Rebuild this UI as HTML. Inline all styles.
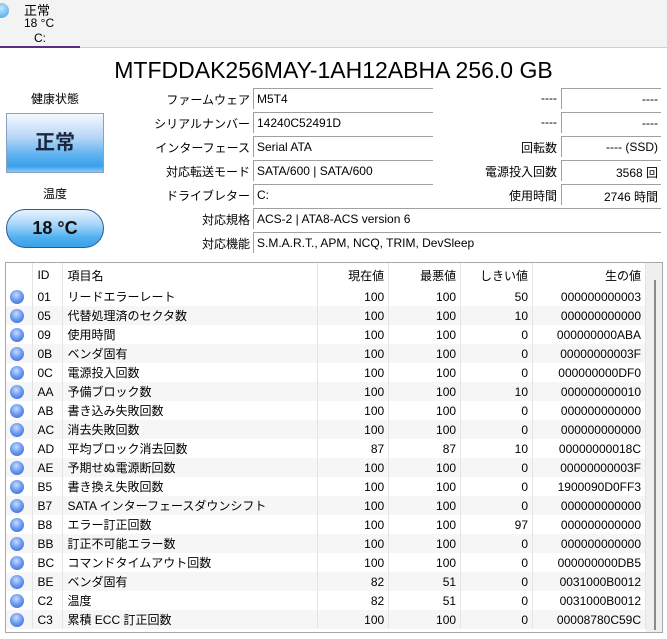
<!DOCTYPE html>
<html><head><meta charset="utf-8"><style>
*{margin:0;padding:0;box-sizing:border-box}
body{width:667px;height:639px;background:#fff;font-family:"Liberation Sans","Noto Sans CJK JP",sans-serif;font-size:12px;color:#000;position:relative;overflow:hidden}
.a{position:absolute}
.lbl{position:absolute;text-align:right;white-space:nowrap;font-size:12px}
.box{position:absolute;height:21px;border-top:1px solid #a0a0a0;border-left:1px solid #a0a0a0;padding:3px 3px;font-size:12px;white-space:nowrap}
.boxr{text-align:right}
table{border-collapse:collapse;position:absolute;left:6px;top:263px;width:640px;font-size:12px}
td{height:19px;padding:0 4px;white-space:nowrap;border-right:1px solid #e4e4e4}
tr.h td{height:24px}
tr:nth-child(odd):not(.h) td{background:#f6f6f6}
.r{text-align:right}
.dot{display:inline-block;width:14px;height:14px;border-radius:50%;background:radial-gradient(circle at 45% 35%,#c8dcff 0,#6f9cf0 45%,#2f5fd0 100%);vertical-align:middle}
</style></head><body>
<div class="a" style="left:0;top:0;width:667px;height:47px;background:#f3f3f3"></div>
<div class="a" style="left:-6px;top:3px;width:15px;height:15px;border-radius:50%;background:radial-gradient(circle at 50% 35%,#bfe6ff,#39a0e8)"></div>
<div class="a" style="left:24px;top:0px;font-size:13px">正常</div>
<div class="a" style="left:24px;top:16px;font-size:12px">18 °C</div>
<div class="a" style="left:34px;top:31px;font-size:12px">C:</div>
<div class="a" style="left:0;top:46px;width:80px;height:2px;background:#5a2d82"></div>
<div class="a" style="left:80px;top:47px;width:587px;height:1px;background:#d0d0d0"></div>

<div class="a" style="left:0;width:667px;top:57px;text-align:center;font-size:23px">MTFDDAK256MAY-1AH12ABHA 256.0 GB</div>

<div class="a" style="left:6px;width:98px;top:90px;text-align:center;font-size:12px">健康状態</div>
<div class="a" style="left:6px;top:113px;width:98px;height:60px;border:1px solid #8aa0c0;background:linear-gradient(#f4f8ff 0%,#b8d6f6 40%,#5fb3f0 70%,#3aa0ea 90%,#8ccaf4 100%);text-align:center;font-size:20px;font-weight:bold;line-height:58px;color:#1a2540">正常</div>
<div class="a" style="left:6px;width:98px;top:185px;text-align:center">温度</div>
<div class="a" style="left:6px;top:209px;width:98px;height:39px;border:1px solid #2a5a9a;border-radius:20px;background:linear-gradient(#e8f4ff 0%,#a6d4f8 40%,#4fb0f0 75%,#3aa0ea 100%);text-align:center;font-size:18px;font-weight:bold;line-height:37px;color:#111">18 °C</div>

<div class="lbl" style="right:417px;top:91px">ファームウェア</div>
<div class="lbl" style="right:417px;top:115px">シリアルナンバー</div>
<div class="lbl" style="right:417px;top:139px">インターフェース</div>
<div class="lbl" style="right:417px;top:163px">対応転送モード</div>
<div class="lbl" style="right:417px;top:187px">ドライブレター</div>
<div class="lbl" style="right:417px;top:211px">対応規格</div>
<div class="lbl" style="right:417px;top:235px">対応機能</div>

<div class="box" style="left:253px;top:88px;width:180px">M5T4</div>
<div class="box" style="left:253px;top:112px;width:180px">14240C52491D</div>
<div class="box" style="left:253px;top:136px;width:180px">Serial ATA</div>
<div class="box" style="left:253px;top:160px;width:180px">SATA/600 | SATA/600</div>
<div class="box" style="left:253px;top:184px;width:180px">C:</div>
<div class="box" style="left:253px;top:208px;width:408px">ACS-2 | ATA8-ACS version 6</div>
<div class="box" style="left:253px;top:232px;width:408px">S.M.A.R.T., APM, NCQ, TRIM, DevSleep</div>

<div class="lbl" style="right:110px;top:91px">----</div>
<div class="lbl" style="right:110px;top:115px">----</div>
<div class="lbl" style="right:110px;top:139px">回転数</div>
<div class="lbl" style="right:110px;top:163px">電源投入回数</div>
<div class="lbl" style="right:110px;top:187px">使用時間</div>
<div class="box boxr" style="left:561px;top:88px;width:100px">----</div>
<div class="box boxr" style="left:561px;top:112px;width:100px">----</div>
<div class="box boxr" style="left:561px;top:136px;width:100px">---- (SSD)</div>
<div class="box boxr" style="left:561px;top:160px;width:100px">3568 回</div>
<div class="box boxr" style="left:561px;top:184px;width:100px">2746 時間</div>

<div class="a" style="left:5px;top:262px;width:658px;height:371px;border:1px solid #a8a8a8"></div>
<div class="a" style="left:646px;top:263px;width:16px;height:369px;background:#f0f0f0"></div>
<div class="a" style="left:654px;top:280px;width:2px;height:350px;background:#8a8a8a"></div>

<table>
<colgroup><col style="width:27px"><col style="width:30px"><col style="width:255px"><col style="width:71px"><col style="width:72px"><col style="width:72px"><col style="width:113px"></colgroup>
<tr class="h"><td></td><td>ID</td><td>項目名</td><td class="r">現在値</td><td class="r">最悪値</td><td class="r">しきい値</td><td class="r">生の値</td></tr>
<tr><td><span class="dot"></span></td><td>01</td><td>リードエラーレート</td><td class="r">100</td><td class="r">100</td><td class="r">50</td><td class="r">000000000003</td></tr>
<tr><td><span class="dot"></span></td><td>05</td><td>代替処理済のセクタ数</td><td class="r">100</td><td class="r">100</td><td class="r">10</td><td class="r">000000000000</td></tr>
<tr><td><span class="dot"></span></td><td>09</td><td>使用時間</td><td class="r">100</td><td class="r">100</td><td class="r">0</td><td class="r">000000000ABA</td></tr>
<tr><td><span class="dot"></span></td><td>0B</td><td>ベンダ固有</td><td class="r">100</td><td class="r">100</td><td class="r">0</td><td class="r">00000000003F</td></tr>
<tr><td><span class="dot"></span></td><td>0C</td><td>電源投入回数</td><td class="r">100</td><td class="r">100</td><td class="r">0</td><td class="r">000000000DF0</td></tr>
<tr><td><span class="dot"></span></td><td>AA</td><td>予備ブロック数</td><td class="r">100</td><td class="r">100</td><td class="r">10</td><td class="r">000000000010</td></tr>
<tr><td><span class="dot"></span></td><td>AB</td><td>書き込み失敗回数</td><td class="r">100</td><td class="r">100</td><td class="r">0</td><td class="r">000000000000</td></tr>
<tr><td><span class="dot"></span></td><td>AC</td><td>消去失敗回数</td><td class="r">100</td><td class="r">100</td><td class="r">0</td><td class="r">000000000000</td></tr>
<tr><td><span class="dot"></span></td><td>AD</td><td>平均ブロック消去回数</td><td class="r">87</td><td class="r">87</td><td class="r">10</td><td class="r">00000000018C</td></tr>
<tr><td><span class="dot"></span></td><td>AE</td><td>予期せぬ電源断回数</td><td class="r">100</td><td class="r">100</td><td class="r">0</td><td class="r">00000000003F</td></tr>
<tr><td><span class="dot"></span></td><td>B5</td><td>書き換え失敗回数</td><td class="r">100</td><td class="r">100</td><td class="r">0</td><td class="r">1900090D0FF3</td></tr>
<tr><td><span class="dot"></span></td><td>B7</td><td>SATA インターフェースダウンシフト</td><td class="r">100</td><td class="r">100</td><td class="r">0</td><td class="r">000000000000</td></tr>
<tr><td><span class="dot"></span></td><td>B8</td><td>エラー訂正回数</td><td class="r">100</td><td class="r">100</td><td class="r">97</td><td class="r">000000000000</td></tr>
<tr><td><span class="dot"></span></td><td>BB</td><td>訂正不可能エラー数</td><td class="r">100</td><td class="r">100</td><td class="r">0</td><td class="r">000000000000</td></tr>
<tr><td><span class="dot"></span></td><td>BC</td><td>コマンドタイムアウト回数</td><td class="r">100</td><td class="r">100</td><td class="r">0</td><td class="r">000000000DB5</td></tr>
<tr><td><span class="dot"></span></td><td>BE</td><td>ベンダ固有</td><td class="r">82</td><td class="r">51</td><td class="r">0</td><td class="r">0031000B0012</td></tr>
<tr><td><span class="dot"></span></td><td>C2</td><td>温度</td><td class="r">82</td><td class="r">51</td><td class="r">0</td><td class="r">0031000B0012</td></tr>
<tr><td><span class="dot"></span></td><td>C3</td><td>累積 ECC 訂正回数</td><td class="r">100</td><td class="r">100</td><td class="r">0</td><td class="r">00008780C59C</td></tr>
</table>
</body></html>
